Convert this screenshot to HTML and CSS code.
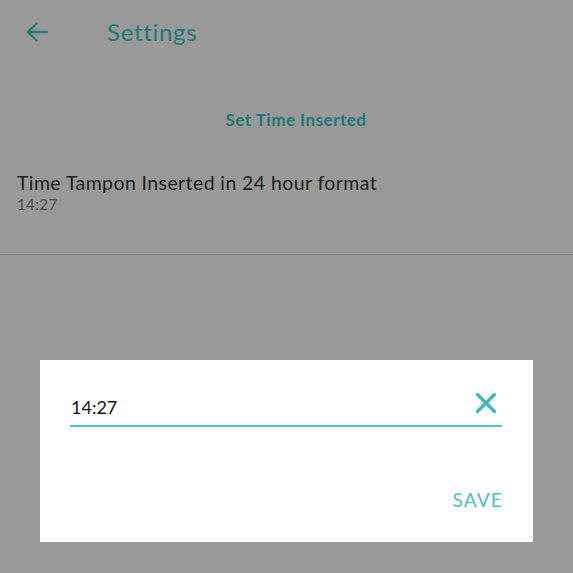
FILE: index.html
```html
<!DOCTYPE html>
<html>
<head>
<meta charset="utf-8">
<link rel="stylesheet" href="styles.css">
</head>
<body>
<div class="page">
  <header class="topbar">
    <svg class="back" width="22" height="20" viewBox="0 0 22 20">
      <path d="M21 10H2.5M10.5 1.5L2 10l8.5 8.5" fill="none" stroke="currentColor" stroke-width="2.4" stroke-linecap="round" stroke-linejoin="round"/>
    </svg>
    <span class="title">Settings</span>
  </header>
  <section class="group">
    <div class="group-title">Set Time Inserted</div>
    <div class="item">
      <div class="item-label">Time Tampon Inserted in 24 hour format</div>
      <div class="item-value">14:27</div>
    </div>
  </section>
</div>
<div class="dialog">
  <div class="field">
    <span class="field-text">14:27</span>
    <svg class="clear" width="22" height="22" viewBox="0 0 22 22">
      <path d="M2.5 2.5L19.5 19.5M19.5 2.5L2.5 19.5" fill="none" stroke="currentColor" stroke-width="3.2" stroke-linecap="round"/>
    </svg>
  </div>
  <div class="actions">
    <span class="save">SAVE</span>
  </div>
</div>
</body>
</html>
```
FILE: styles.css
```css
html, body {
  margin: 0;
  padding: 0;
  width: 573px;
  height: 573px;
  overflow: hidden;
  background: #999999;
  font-family: Lato, "Open Sans", sans-serif;
}
.page {
  height: 573px;
  background: #999999;
}
.topbar {
  height: 63px;
  display: flex;
  align-items: center;
  padding-left: 26px;
  color: #217878;
}
.back {
  display: block;
}
.title {
  margin-left: 59px;
  font-size: 24px;
  color: #237878;
  letter-spacing: 0.7px;
}
.group {
  border-bottom: 1.5px solid #858585;
  height: 191px;
}
.group-title {
  text-align: center;
  font-weight: bold;
  font-size: 17px;
  color: #217878;
  padding-top: 46px;
  padding-left: 19px;
  letter-spacing: 0.5px;
}
.item {
  padding: 41px 17px 0;
}
.item-label {
  font-size: 19.5px;
  color: #1f1f1f;
  line-height: 24px;
  letter-spacing: 0.4px;
}
.item-value {
  font-size: 15px;
  color: #505050;
  line-height: 18px;
  letter-spacing: 0.4px;
}
.dialog {
  position: absolute;
  left: 40px;
  top: 360px;
  width: 493px;
  height: 182px;
  background: #ffffff;
  box-sizing: border-box;
  padding: 0 31px 0 30px;
}
.field {
  display: flex;
  align-items: center;
  justify-content: space-between;
  height: 67px;
  border-bottom: 2px solid #4ec0c6;
  padding-left: 1px;
  padding-right: 5px;
  box-sizing: border-box;
}
.field-text {
  font-size: 18px;
  color: #111111;
  margin-top: 28px;
}
.clear {
  color: #3fb8bd;
  margin-top: 20px;
}
.actions {
  display: flex;
  justify-content: flex-end;
  padding-top: 61px;
}
.save {
  font-size: 19px;
  color: #4ec0c6;
  letter-spacing: 1.2px;
  margin-right: -1px;
}
```
